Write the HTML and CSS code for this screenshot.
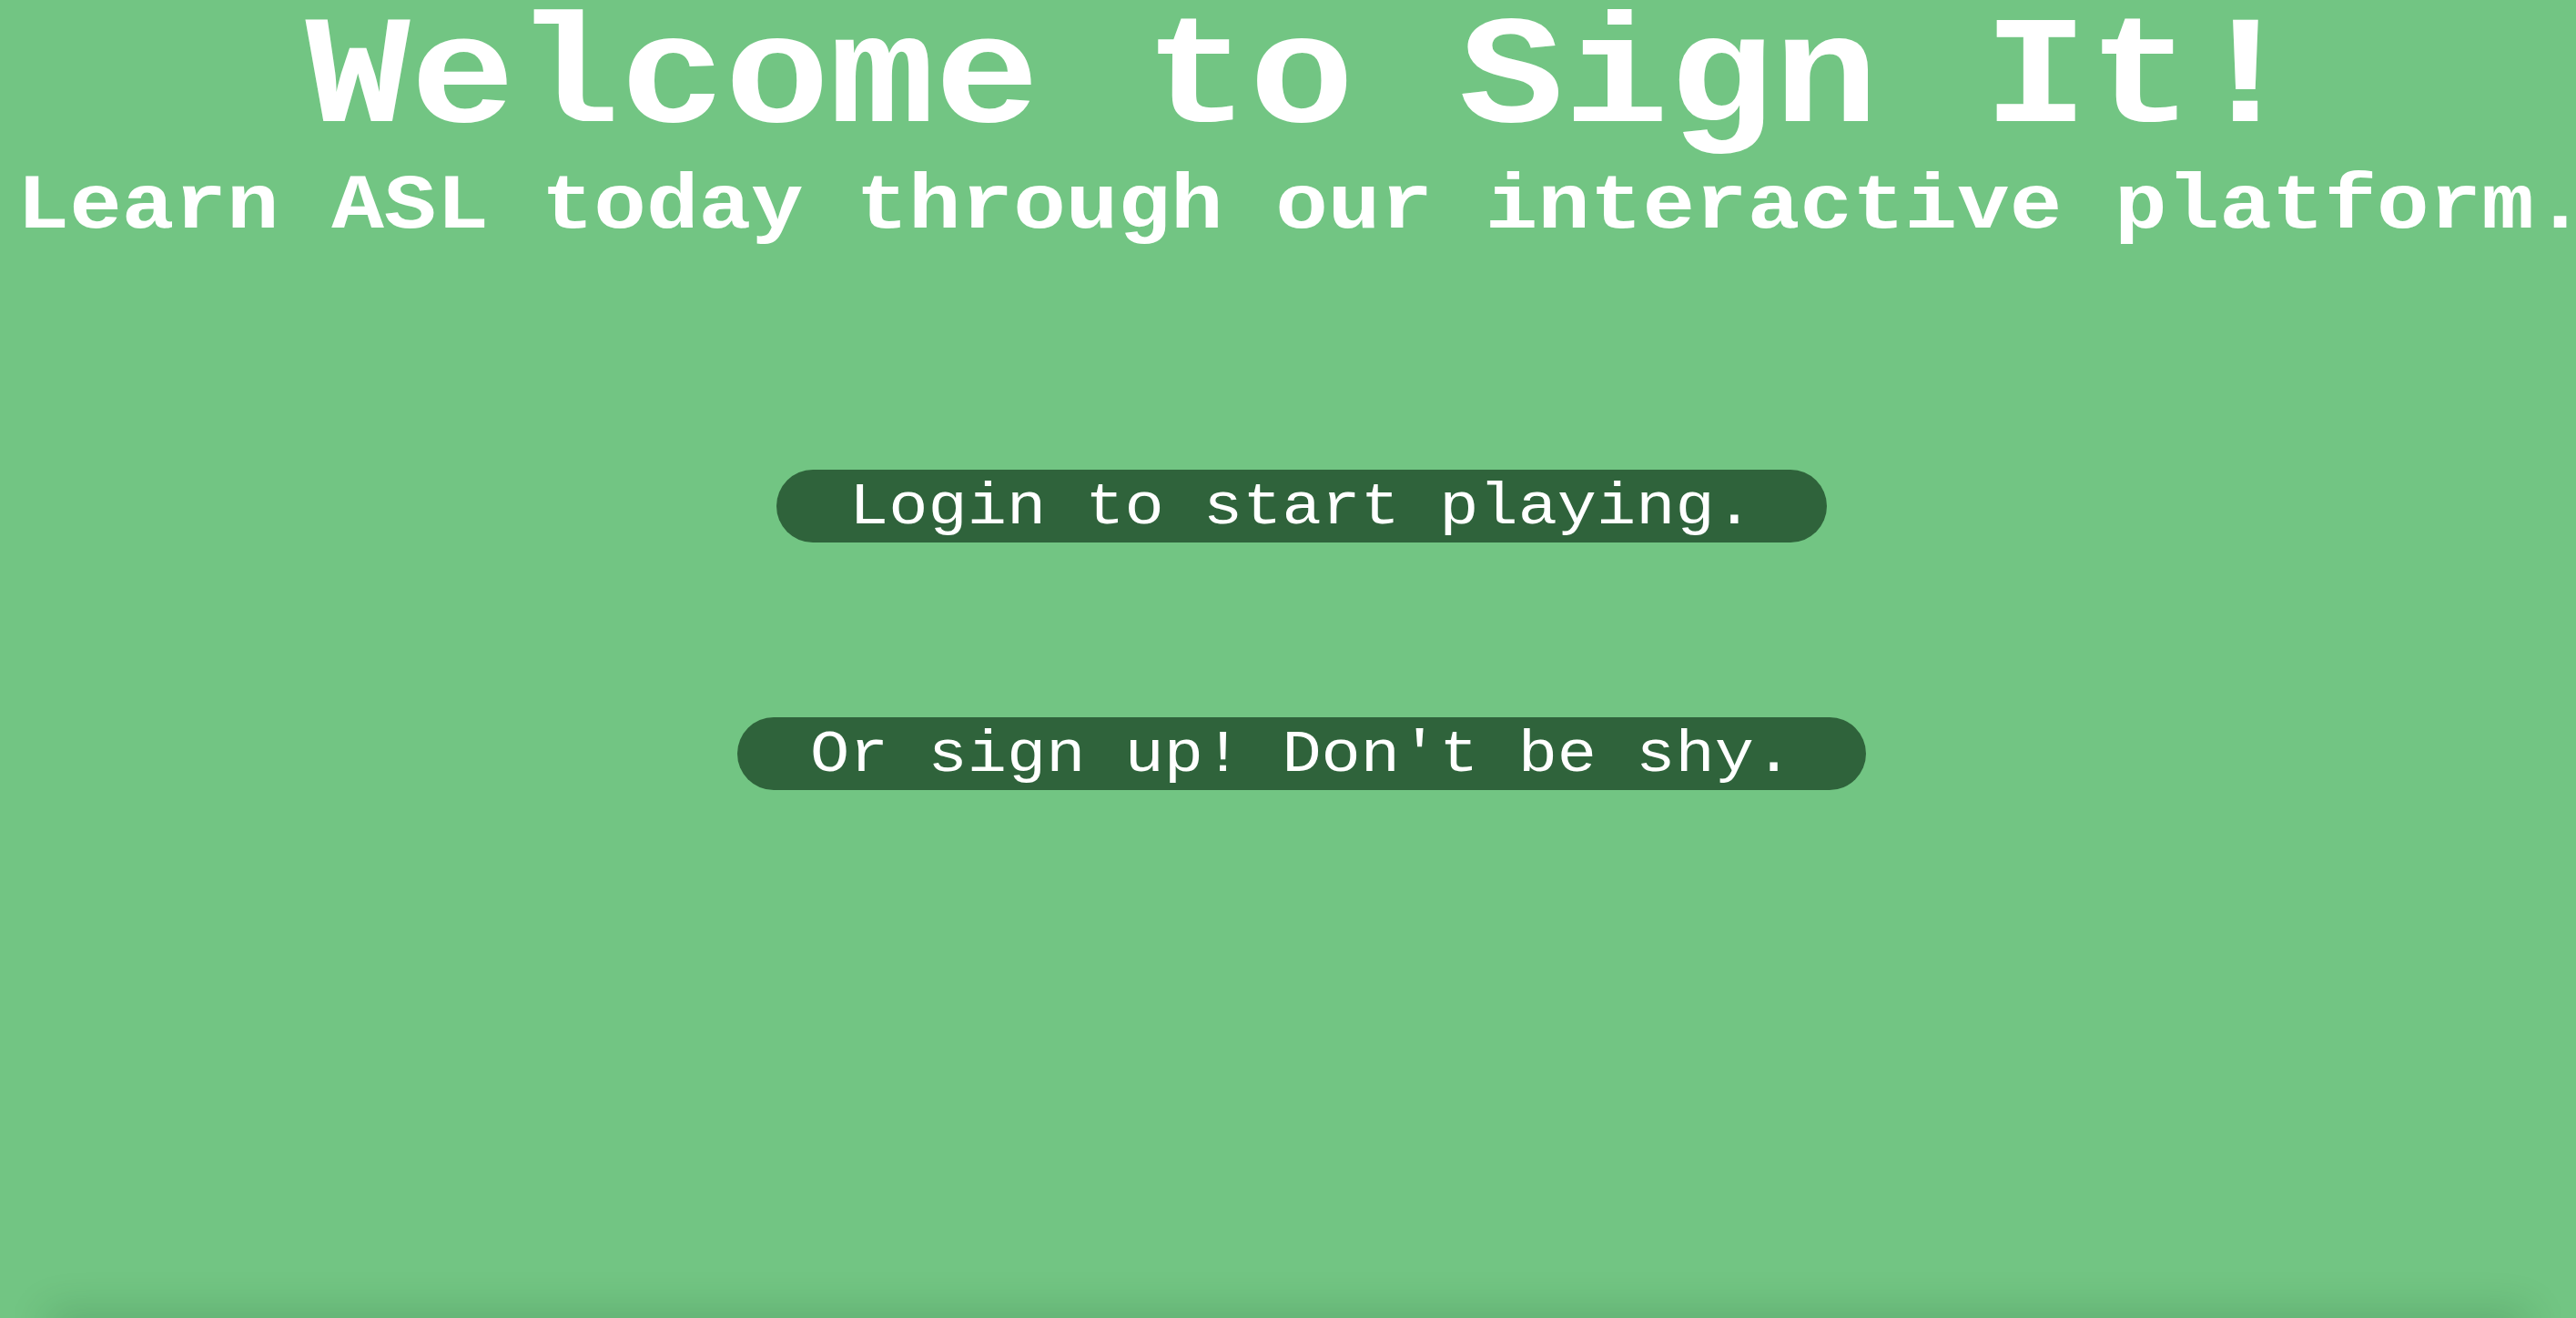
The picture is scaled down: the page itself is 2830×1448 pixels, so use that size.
FILE: index.html
```html
<!DOCTYPE html>
<html>
<head>
<meta charset="utf-8">
<title>Sign It</title>
<link rel="stylesheet" href="styles.css">
</head>
<body>
<main class="page">
  <header class="hero">
    <h1 class="title">Welcome to Sign It!</h1>
    <h2 class="subtitle">Learn ASL today through our interactive platform.</h2>
  </header>
  <div class="actions">
    <button class="pill-btn"><span class="pill-label">Login to start playing.</span></button>
    <button class="pill-btn"><span class="pill-label">Or sign up! Don't be shy.</span></button>
  </div>
</main>
<div class="bottom-shade"></div>
</body>
</html>
```
FILE: styles.css
```css
html {
  overflow: hidden;
  height: 100%;
}
body {
  margin: 0 8px;
  height: 100%;
  background: #72c583;
  font-family: "Liberation Mono", "Courier New", monospace;
  color: #ffffff;
}
.page {
  width: 2844px;
  display: flex;
  flex-direction: column;
  align-items: center;
}
.hero {
  display: flex;
  flex-direction: column;
  align-items: center;
  width: 100%;
}
.title {
  margin: 0;
  font-size: 192px;
  line-height: 164px;
  font-weight: bold;
  white-space: nowrap;
  text-align: center;
  transform: scaleY(0.88);
  transform-origin: 50% 133px;
}
.subtitle {
  margin: 0;
  font-size: 96px;
  line-height: 122px;
  font-weight: bold;
  white-space: nowrap;
  text-align: center;
  transform: scaleY(0.88);
  transform-origin: 50% 86px;
}
.actions {
  display: flex;
  flex-direction: column;
  align-items: center;
  gap: 192px;
  margin-top: 230px;
}
.pill-btn {
  height: 80px;
  padding: 0 80px;
  border: none;
  border-radius: 40px;
  background: #2f633b;
  color: #ffffff;
  font-family: "Liberation Mono", "Courier New", monospace;
  font-size: 72px;
  line-height: 80px;
  white-space: nowrap;
}
.pill-label {
  display: inline-block;
  transform: scaleY(0.89);
  transform-origin: 50% 59px;
}
.bottom-shade {
  position: fixed;
  left: 60px;
  right: 60px;
  top: 100%;
  height: 20px;
  box-shadow: 0 0 44px 6px rgba(20, 70, 30, 0.22);
  pointer-events: none;
}
```
